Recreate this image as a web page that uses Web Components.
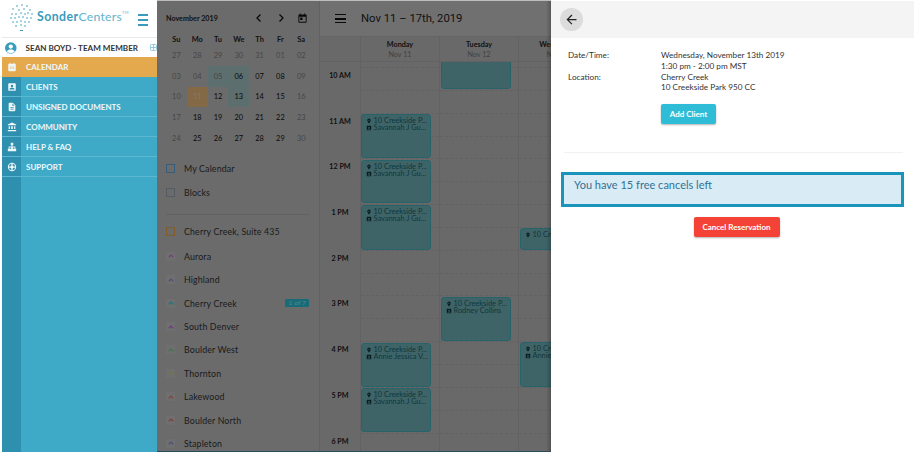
<!DOCTYPE html>
<html>
<head>
<meta charset="utf-8">
<title>Sonder Centers</title>
<style>
    html, body { margin: 0; height: 100%; overflow: hidden; background: #fff; }
    body { font-family: "Lato", "Liberation Sans", sans-serif; }
</style>
</head>
<body>
<app-shell>
    <side-nav slot="nav"></side-nav>
    <calendar-sidebar slot="sidebar"></calendar-sidebar>
    <week-view slot="main"></week-view>
    <detail-panel slot="panel"></detail-panel>
</app-shell>

<script>
'use strict';

const ICONS = {
    calendar: 'M19 4h-1V2h-2v2H8V2H6v2H5a2 2 0 0 0-2 2v14a2 2 0 0 0 2 2h14a2 2 0 0 0 2-2V6a2 2 0 0 0-2-2zM7 11h2v2H7zm4 0h2v2h-2zm4 0h2v2h-2zM7 15h2v2H7zm4 0h2v2h-2zm4 0h2v2h-2z',
    contacts: 'M5 3h14a2 2 0 0 1 2 2v14a2 2 0 0 1-2 2H5a2 2 0 0 1-2-2V5a2 2 0 0 1 2-2zm7 3.5a3 3 0 1 0 0 6 3 3 0 0 0 0-6zM6 18h12v-1c0-2-4-3-6-3s-6 1-6 3z',
    document: 'M14 2H6a2 2 0 0 0-2 2v16a2 2 0 0 0 2 2h12a2 2 0 0 0 2-2V8zm2 16H8v-2h8zm0-4H8v-2h8zm-3-5V3.5L18.500 9z',
    bank: 'M4 10v7h3v-7zm6 0v7h4v-7zM2 22h20v-3H2zm15-12v7h3v-7zM12 1 2 6v2h20V6z',
    hierarchy: 'M9 2h6v6h-2v3h7v5h2v6h-6v-6h2v-3h-4v3h2v6H8v-6h2v-3H6v3h2v6H2v-6h2v-5h7V8H9z',
    support: 'M12 2a10 10 0 1 0 0 20 10 10 0 0 0 0-20zm-1.500 2.200v4.300a4 4 0 0 0-2 2H4.200a8 8 0 0 1 6.300-6.300zm3 0a8 8 0 0 1 6.300 6.300h-4.300a4 4 0 0 0-2-2zM4.200 13.500h4.300a4 4 0 0 0 2 2v4.300a8 8 0 0 1-6.300-6.300zm11.300 0h4.300a8 8 0 0 1-6.300 6.300v-4.300a4 4 0 0 0 2-2z',
    pin: 'M12 2a7 7 0 0 0-7 7c0 5 7 13 7 13s7-8 7-13a7 7 0 0 0-7-7zm0 9.500A2.500 2.500 0 1 1 12 6.500a2.500 2.500 0 0 1 0 5z',
    today: 'M19 3h-1V1h-2v2H8V1H6v2H5a2 2 0 0 0-2 2v14a2 2 0 0 0 2 2h14a2 2 0 0 0 2-2V5a2 2 0 0 0-2-2zm0 16H5V8h14zM7 10h5v5H7z',
};

function icon(name, size, color)
{
    return `<svg width="${size}" height="${size}" viewBox="0 0 24 24" fill="${color}" aria-hidden="true"><path fill-rule="evenodd" d="${ICONS[name]}"/></svg>`;
}

/**
 * Page frame: nav, dimmed calendar area, and the panel that slides over it.
 * The surfaces under the veil are tinted so the veil lands on the screenshot's greys.
 */
class AppShell extends HTMLElement
{
    constructor()
    {
        super();
        this.attachShadow({mode: 'open'});
        this.shadowRoot.innerHTML = `
            <style>
                :host { display: flex; height: 452px; width: 914px; overflow: hidden; padding-left: 2px; box-sizing: border-box; position: relative; }
                .dimmed { display: flex; position: relative; flex: none; width: 394px; overflow: hidden; box-sizing: border-box; border-top: 1px solid #bdbdbd; border-bottom: 1px solid #2c4c5a; }
                .veil { position: absolute; inset: 0; background: rgba(0, 0, 0, .45); }
                .shade { position: absolute; top: 0; bottom: 0; right: 0; width: 5px; background: linear-gradient(to right, rgba(0,0,0,0), rgba(0,0,0,.22)); }
            </style>
            <slot name="nav"></slot>
            <div class="dimmed">
                <slot name="sidebar"></slot>
                <slot name="main"></slot>
                <div class="veil"></div>
                <div class="shade"></div>
            </div>
            <slot name="panel"></slot>
        `;
    }
}

class NavItem extends HTMLElement
{
    connectedCallback()
    {
        const active = this.hasAttribute('active');
        this.attachShadow({mode: 'open'});
        this.shadowRoot.innerHTML = `
            <style>
                :host { display: flex; height: 20px; box-sizing: border-box; border-bottom: 1px solid ${active ? '#e5a94d' : '#5cb8d2'}; color: #eef8fb; background: ${active ? '#e5a94d' : '#3eaac8'}; font-size: 8px; font-weight: 700; align-items: center; }
                .ico { width: 19px; height: 100%; display: flex; align-items: center; justify-content: center; background: ${active ? '#e5a94d' : '#2f8fae'}; margin-right: 5px; }
            </style>
            <span class="ico">${icon(this.getAttribute('icon'), 10, '#eef8fb')}</span>
            <slot></slot>
        `;
    }
}

class SideNav extends HTMLElement
{
    constructor()
    {
        super();
        const items = [
            ['calendar', 'CALENDAR', true],
            ['contacts', 'CLIENTS'],
            ['document', 'UNSIGNED DOCUMENTS'],
            ['bank', 'COMMUNITY'],
            ['hierarchy', 'HELP &amp; FAQ'],
            ['support', 'SUPPORT'],
        ];
        this.attachShadow({mode: 'open'});
        this.shadowRoot.innerHTML = `
            <style>
                :host { display: flex; flex-direction: column; flex: none; width: 155px; background: #3eaac8; position: relative; }
                .brand { height: 38px; flex: none; background: #fff; display: flex; align-items: center; padding: 0 9px 4px 8px; box-sizing: border-box; border-bottom: 1px solid #e9e9e9; }
                .name { font-size: 12.300px; font-weight: 700; color: #3a9cbc; margin-left: 3px; letter-spacing: .45px; white-space: nowrap; }
                .name span { font-weight: 400; color: #62b4cd; letter-spacing: .2px; }
                sup { font-size: 4px; font-weight: 400; color: #62b4cd; vertical-align: 7px; }
                .burger { margin-left: auto; margin-top: 6px; width: 10px; height: 8px; border-top: 2px solid #3a9cbc; border-bottom: 2px solid #3a9cbc; position: relative; flex: none; }
                .burger::after { content: ''; position: absolute; left: 0; right: 0; top: 3px; height: 2px; background: #3a9cbc; }
                .user { height: 19px; flex: none; background: #fff; display: flex; align-items: center; font-size: 8.100px; font-weight: 700; color: #333; white-space: nowrap; overflow: hidden; box-sizing: border-box; padding-left: 3px; }
                .user b { margin-left: 9px; font-weight: 700; }
                .expand { margin-left: 12px; flex: none; }
            </style>
            <div class="brand">
                <svg width="24" height="28" viewBox="0 0 24 28" fill="#3a9cbc" aria-hidden="true">
                    ${[[12,2],[7,3],[17,3],[3,6],[9,7],[14,6],[20,7],[2,11],[6,11],[11,10],[15,11],[18,10],[22,11],[1,15],[5,15],[9,14],[13,14],[17,15],[21,15],[3,19],[7,19],[11,18],[15,19],[19,19],[6,23],[11,22],[15,23]].map(p => `<circle cx="${p[0]}" cy="${p[1]}" r=".8"/>`).join('')}
                    <rect x="10" y="27" width="3" height="1"/>
                </svg>
                <span class="name">Sonder<span>Centers</span><sup>TM</sup></span>
                <span class="burger"></span>
            </div>
            <div class="user">
                <svg width="12" height="12" viewBox="0 0 24 24" aria-hidden="true"><circle cx="12" cy="12" r="12" fill="#3a9cbc"/><circle cx="12" cy="9" r="4.500" fill="#fff"/><path d="M4 20c1-4 4-5 8-5s7 1 8 5a12 12 0 0 1-16 0z" fill="#fff"/></svg>
                <b>SEAN BOYD - TEAM MEMBER</b>
                <svg class="expand" width="7" height="7" viewBox="0 0 7 7" fill="none" stroke="#7bbfd6" stroke-width=".8" aria-hidden="true"><rect x=".5" y=".5" width="6" height="6" rx="1"/><path d="M3.500 1v5M1 3.500h5"/></svg>
            </div>
            ${items.map(i => `<nav-item icon="${i[0]}" ${i[2] ? 'active' : ''}>${i[1]}</nav-item>`).join('')}
            <div style="flex:1; display:flex"><div style="width:19px; background:#2f8fae"></div></div>
        `;
    }
}

class MiniCalendar extends HTMLElement
{
    constructor()
    {
        super();
        const days = ['Su', 'Mo', 'Tu', 'We', 'Th', 'Fr', 'Sa'];
        const rows = [
            ['27', '28', '29', '30', '31', '01', '02'],
            ['03', '04', '05', '06', '07', '08', '09'],
            ['10', '11', '12', '13', '14', '15', '16'],
            ['17', '18', '19', '20', '21', '22', '23'],
            ['24', '25', '26', '27', '28', '29', '30'],
        ];
        const faded = new Set(['0-0','0-1','0-2','0-3','0-4','0-5','0-6','1-0','1-1','1-2','1-6','2-0','2-6','3-0','3-6','4-0','4-6']);
        const booked = new Set(['1-2', '1-3', '2-3']);

        let cells = days.map(d => `<span class="head">${d}</span>`).join('');
        rows.forEach((row, r) => row.forEach((d, c) => {
            const key = `${r}-${c}`;
            let cls = faded.has(key) ? 'faded' : '';
            if(booked.has(key)) cls += ' booked';
            if(key === '2-1') cls = 'today';
            cells += `<span class="${cls}">${d}</span>`;
        }));

        this.attachShadow({mode: 'open'});
        this.shadowRoot.innerHTML = `
            <style>
                :host { display: block; padding: 9px 5px 0 9px; font-size: 7.400px; color: #111; }
                .top { display: flex; align-items: center; height: 16px; font-size: 7.200px; font-weight: 700; color: #222; }
                .top svg { flex: none; }
                .title { margin-right: auto; }
                .grid { display: grid; grid-template-columns: repeat(7, 20.800px); grid-template-rows: 11px; grid-auto-rows: 20.800px; margin-top: 8px; text-align: center; }
                .grid span { display: flex; align-items: center; justify-content: center; }
                .grid .head { font-weight: 700; color: #222; }
                .faded { color: #808080; }
                .booked { background: #a8c8c8; }
                .today { background: #eebf80; color: #f0dcb8; }
            </style>
            <div class="top">
                <span class="title">November 2019</span>
                <svg width="8" height="10" viewBox="0 0 8 10" fill="none" stroke="#111" stroke-width="1.300" style="margin-right:14px"><path d="M5.500 1.500 2 5l3.500 3.500"/></svg>
                <svg width="8" height="10" viewBox="0 0 8 10" fill="none" stroke="#111" stroke-width="1.300" style="margin-right:12px"><path d="M2.500 1.500 6 5 2.500 8.500"/></svg>
                <svg width="11" height="11" viewBox="0 0 24 24" fill="#111"><path fill-rule="evenodd" d="${ICONS.today}"/></svg>
                <span style="width:6px"></span>
            </div>
            <div class="grid">${cells}</div>
        `;
    }
}

class FilterRow extends HTMLElement
{
    connectedCallback()
    {
        const box = this.getAttribute('box');
        const tint = this.getAttribute('tint');
        const badge = this.getAttribute('badge');
        const mark = box
            ? `<span class="box" style="border-color:${box}"></span>`
            : `<span class="chip"><svg width="6" height="4" viewBox="0 0 6 4" fill="none" stroke="${tint}" stroke-width="1.200"><path d="M.7 3.300 3 1l2.300 2.300"/></svg></span>`;

        this.attachShadow({mode: 'open'});
        this.shadowRoot.innerHTML = `
            <style>
                :host { display: flex; align-items: center; height: 23.400px; font-size: 8.800px; color: #333; letter-spacing: .15px; }
                .box { width: 7px; height: 7px; border: 1px solid; margin-right: 9px; flex: none; }
                .chip { width: 9px; height: 9px; background: #cacaca; margin-right: 9px; display: flex; align-items: center; justify-content: center; flex: none; }
                .badge { margin-left: auto; background: #2dc3dc; color: #b5e8f0; font-size: 6.500px; padding: 1px 3px; border-radius: 1px; line-height: 6px; }
            </style>
            ${mark}
            <slot></slot>
            ${badge ? `<span class="badge">${badge}</span>` : ''}
        `;
    }
}

class CalendarSidebar extends HTMLElement
{
    constructor()
    {
        super();
        const places = [
            ['Aurora', '#c86fe0'],
            ['Highland', '#8490e0'],
            ['Cherry Creek', '#24d8ee', '1 of 7'],
            ['South Denver', '#d25cf0'],
            ['Boulder West', '#70d880'],
            ['Thornton', '#c6e270'],
            ['Lakewood', '#f07a6c'],
            ['Boulder North', '#f06c64'],
            ['Stapleton', '#8490e0'],
        ];
        this.attachShadow({mode: 'open'});
        this.shadowRoot.innerHTML = `
            <style>
                :host { display: block; flex: none; width: 163px; background: #c4c4c4; border-right: 1px solid #b2b2b2; box-sizing: border-box; overflow: hidden; }
                .lists { padding: 8px 10px 0 9px; }
                hr { border: 0; border-top: 1px solid #b2b2b2; margin: 10px 0 5px; }
                .suite { margin-bottom: 1.500px; }
            </style>
            <mini-calendar></mini-calendar>
            <div class="lists">
                <filter-row box="#5fa9dc">My Calendar</filter-row>
                <filter-row box="#9aa7b5">Blocks</filter-row>
                <hr>
                <filter-row class="suite" box="#e5a94d">Cherry Creek, Suite 435</filter-row>
                ${places.map(p => `<filter-row tint="${p[1]}" ${p[2] ? `badge="${p[2]}"` : ''}>${p[0]}</filter-row>`).join('')}
            </div>
        `;
    }
}

class CalEvent extends HTMLElement
{
    connectedCallback()
    {
        const who = this.getAttribute('who');
        // an event scrolled past the top of the grid shows only its lower part
        const lines = this.hasAttribute('bare') ? '' : `
            <div>${icon('pin', 6, '#0c3440')}10 Creekside P...</div>
            ${who ? `<div>${icon('contacts', 6, '#0c3440')}${who}</div>` : ''}
        `;
        this.attachShadow({mode: 'open'});
        this.shadowRoot.innerHTML = `
            <style>
                :host { display: block; position: absolute; left: 1px; width: 70px; box-sizing: border-box; background: #74b6bc; border: 1px solid #45b5c4; border-radius: 3px; padding: 2px 0 0 4px; font-size: 7.400px; line-height: 7.400px; color: #1a666f; white-space: nowrap; overflow: hidden; }
                div { display: flex; align-items: center; gap: 1.500px; height: 7.400px; }
                svg { flex: none; }
            </style>
            ${lines}
        `;
    }
}

class WeekView extends HTMLElement
{
    constructor()
    {
        super();
        const days = [['Monday', 'Nov 11'], ['Tuesday', 'Nov 12'], ['Wednesday', 'Nov 13']];
        const hours = ['10 AM', '11 AM', '12 PM', '1 PM', '2 PM', '3 PM', '4 PM', '5 PM', '6 PM'];
        const lines = '<i></i>'.repeat(18);
        // top offset and height in px from the start of the grid body
        const events = [
            [
                [52, 44, 'Savannah J Gu...'], [98, 43, 'Savannah J Gu...'], [143, 45, 'Savannah J Gu...'],
                [281, 44, 'Annie Jessica V...'], [326, 44, 'Savannah J Gu...'],
            ],
            [[-4, 31, '', true], [235, 44, 'Rodney Collins']],
            [[166, 22, ''], [280, 45, 'Annie Jessica V...']],
        ];

        const columns = events.map((list, d) => `
            <div class="day">${lines}${list.map(e => `<cal-event style="top:${e[0]}px;height:${e[1]}px;${d === 0 ? 'left:0' : ''}" ${e[2] ? `who="${e[2]}"` : ''} ${e[3] ? 'bare' : ''}></cal-event>`).join('')}</div>
        `).join('');

        this.attachShadow({mode: 'open'});
        this.shadowRoot.innerHTML = `
            <style>
                :host { display: block; flex: none; width: 231px; background: #c0c0c0; overflow: hidden; }
                .bar { height: 36px; display: flex; align-items: center; background: #cccccc; border-bottom: 1px solid #b8b8b8; box-sizing: border-box; padding-left: 15px; font: 400 11.300px "Roboto", sans-serif; color: #222; }
                .menu { width: 11px; height: 7px; border-top: 1.500px solid #111; border-bottom: 1.500px solid #111; margin-right: 15px; position: relative; flex: none; }
                .menu::after { content: ''; position: absolute; left: 0; right: 0; top: 3px; height: 1.500px; background: #111; }
                .head, .body { display: grid; grid-template-columns: 40px repeat(3, 79px); width: 277px; }
                .head { height: 25px; text-align: center; font-size: 7.200px; border-bottom: 1px solid #b2b2b2; box-sizing: border-box; }
                .head div { border-left: 1px solid #b2b2b2; padding-top: 3px; font-weight: 700; color: #222; white-space: nowrap; overflow: hidden; line-height: 9.500px; }
                .head div:first-child { border: 0; }
                .head small { display: block; font-size: 7.200px; font-weight: 400; color: #777; }
                .body { overflow: hidden; height: 400px; }
                .time, .day { display: flex; flex-direction: column; }
                .day { position: relative; border-left: 1px solid #b2b2b2; }
                i { display: block; height: 22.850px; flex: none; border-bottom: 1px dashed #b2b2b2; box-sizing: border-box; }
                .day i:first-child { height: 6px; }
                .time { padding-top: 6px; font-size: 7.200px; font-weight: 700; color: #222; text-align: center; }
                .time span { height: 45.700px; flex: none; padding-top: 3px; box-sizing: border-box; }
            </style>
            <div class="bar"><span class="menu"></span>Nov 11 – 17th, 2019</div>
            <div class="head"><div></div>${days.map(d => `<div>${d[0]}<small>${d[1]}</small></div>`).join('')}</div>
            <div class="body">
                <div class="time">${hours.map(h => `<span>${h}</span>`).join('')}</div>
                ${columns}
            </div>
        `;
    }
}

class DetailPanel extends HTMLElement
{
    constructor()
    {
        super();
        this.attachShadow({mode: 'open'});
        this.shadowRoot.innerHTML = `
            <style>
                :host { display: flex; flex-direction: column; flex: none; width: 363px; background: #fff; position: relative; font-size: 8.200px; color: #333; }
                .bar { height: 37px; margin-top: 1px; flex: none; background: #f4f4f4; display: flex; align-items: center; padding-left: 9px; box-sizing: border-box; }
                .back { width: 23px; height: 23px; border-radius: 50%; background: #dcdcdc; display: flex; align-items: center; justify-content: center; }
                .info { display: grid; grid-template-columns: 93px 1fr; padding: 12px 0 0 17px; line-height: 10.800px; }
                button { font: 700 8px "Lato", sans-serif; color: #fff; border: 0; border-radius: 2px; box-shadow: 0 1px 2px rgba(0,0,0,.3); height: 20px; padding: 0; display: block; }
                .add { width: 55px; background: #2fbcd6; margin: 11px 0 0 110px; }
                hr { border: 0; border-top: 1px solid #f1f1f1; margin: 28px 11px 0 13px; }
                .alert { margin: 19px 10px 0 10px; height: 35px; box-sizing: border-box; border: 3px solid #1a94bb; background: #d9ebf5; color: #2f7396; font-size: 11px; padding: 3px 10px; line-height: 14px; }
                .cancel { width: 86px; background: #f44336; margin: 10px auto 0; transform: translateX(4px); }
            </style>
            <div class="bar">
                <span class="back"><svg width="15" height="15" viewBox="0 0 24 24" fill="#222"><path d="M20 11H7.800l5.600-5.600L12 4l-8 8 8 8 1.400-1.400L7.800 13H20z"/></svg></span>
            </div>
            <div class="info">
                <span>Date/Time:</span><span>Wednesday, November 13th 2019</span>
                <span></span><span>1:30 pm - 2:00 pm MST</span>
                <span>Location:</span><span>Cherry Creek</span>
                <span></span><span>10 Creekside Park 950 CC</span>
            </div>
            <button class="add">Add Client</button>
            <hr>
            <div class="alert">You have 15 free cancels left</div>
            <button class="cancel">Cancel Reservation</button>
        `;
    }
}

customElements.define('app-shell', AppShell);
customElements.define('nav-item', NavItem);
customElements.define('side-nav', SideNav);
customElements.define('mini-calendar', MiniCalendar);
customElements.define('filter-row', FilterRow);
customElements.define('calendar-sidebar', CalendarSidebar);
customElements.define('cal-event', CalEvent);
customElements.define('week-view', WeekView);
customElements.define('detail-panel', DetailPanel);
</script>
</body>
</html>
